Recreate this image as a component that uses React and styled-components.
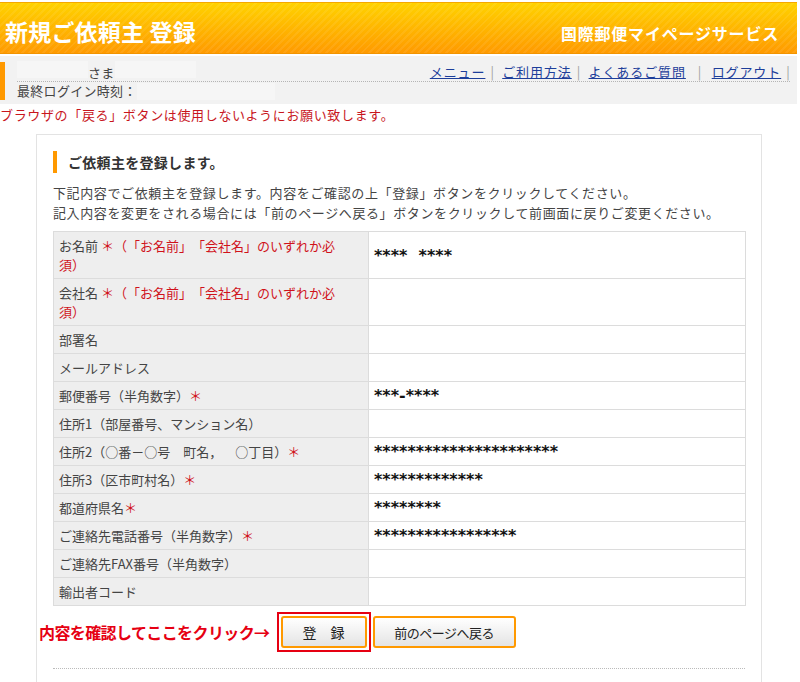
import React from "react";
import styled, { createGlobalStyle } from "styled-components";

const GlobalStyle = createGlobalStyle`
  body {
    margin: 0;
    background: #fff;
    font-family: "Noto Sans CJK JP", "Noto Sans", sans-serif;
    color: #444;
    text-spacing-trim: space-all;
  }
`;

const Page = styled.div`
  width: 797px;
`;

const Header = styled.header`
  display: flex;
  align-items: center;
  justify-content: space-between;
  height: 52px;
  margin-top: 2px;
  padding: 6px 18px 0 5px;
  box-sizing: border-box;
  border-top: 1px solid #f5a800;
  border-bottom: 1px solid #f29400;
  background:
    repeating-linear-gradient(135deg, rgba(255, 255, 255, 0.07) 0 2px, transparent 2px 5px),
    linear-gradient(#ffd200, #ff9a00);
  color: #fff;
  font-weight: 700;
`;

const PageTitle = styled.h1`
  margin: 0;
  font-size: 23px;
  letter-spacing: 0.2px;
`;

const ServiceName = styled.div`
  font-size: 16px;
  letter-spacing: 0.8px;
  padding-top: 4px;
`;

const UserBar = styled.div`
  display: flex;
  margin-top: 2px;
  padding: 6px 0 4px;
  background: #f2f2f2;
  font-size: 13px;
`;

const Mark = styled.div`
  width: 5px;
  background: #ff9900;
`;

const UserInfo = styled.div`
  flex: 1;
  margin: 0 7px 0 12px;
`;

const InfoRow = styled.div`
  display: flex;
  align-items: center;
  justify-content: ${(p) => (p.$split ? "space-between" : "flex-start")};
  height: ${(p) => (p.$split ? "19px" : "18px")};
  line-height: 18px;
  letter-spacing: 0.3px;
  border-bottom: ${(p) => (p.$split ? "1px dotted #b5b5b5" : "none")};
`;

const Blank = styled.span`
  display: inline-block;
  width: ${(p) => p.$w}px;
  height: 17px;
  background: #f6f6f6;
`;

const Links = styled.nav`
  display: flex;
  align-items: center;
`;

const NavLink = styled.a`
  color: #1d3e9a;
  text-decoration: underline;
  letter-spacing: 0.9px;
  cursor: pointer;
`;

const Sep = styled.span`
  color: #a0a0a0;
  margin: 0 ${(p) => (p.$wide ?? 8)}px 0 ${(p) => p.$left || 5}px;
`;

const Warning = styled.p`
  margin: 1px 0 0;
  font-size: 13px;
  line-height: 20px;
  letter-spacing: 0.65px;
  color: #c8161d;
`;

const Panel = styled.section`
  width: 726px;
  box-sizing: border-box;
  margin: 9px 0 0 36px;
  padding: 16px 16px 40px;
  border: 1px solid #e3e3e3;
`;

const Heading = styled.h2`
  margin: 0;
  padding-left: 11px;
  border-left: 4px solid #ff9900;
  height: 22px;
  line-height: 22px;
  font-size: 14px;
  letter-spacing: 0.3px;
  color: #333;
`;

const Intro = styled.p`
  margin: 10px 0 0;
  font-size: 13px;
  line-height: 20px;
  color: #444;
  letter-spacing: 0.62px;
`;

const Table = styled.table`
  width: 693px;
  margin-top: 8px;
  border-collapse: collapse;
  border: 1px solid #dcdcdc;
`;

const Label = styled.th`
  width: 303px;
  padding: 4px 6px 4px 5px;
  background: #eeeeee;
  border: 1px solid #dcdcdc;
  text-align: left;
  font-weight: 400;
  font-size: 13px;
  line-height: 19px;
  color: #444;
`;

const Value = styled.td`
  padding: 4px 6px 4px 5px;
  border: 1px solid #dcdcdc;
  font-family: "DejaVu Sans", sans-serif;
  font-weight: 700;
  font-size: 16px;
  line-height: 19px;
  color: #111;
  white-space: pre;
`;

const Req = styled.span`
  color: #d0121b;
`;

const Actions = styled.div`
  display: flex;
  align-items: center;
  margin: 6px 0 0 -14px;
`;

const Hint = styled.span`
  margin-right: 7px;
  font-size: 16px;
  font-weight: 700;
  letter-spacing: -0.6px;
  color: #e60012;
`;

const Frame = styled.div`
  display: flex;
  padding: 2px;
  border: 2px solid #e60012;
`;

const Button = styled.button`
  box-sizing: border-box;
  width: ${(p) => p.$w}px;
  height: 32px;
  margin-left: ${(p) => p.$gap || 0}px;
  border: 2px solid #ff9900;
  border-radius: 3px;
  background: linear-gradient(#ffffff, #e4e4e4);
  font-family: "Noto Sans CJK JP", sans-serif;
  font-size: ${(p) => p.$size || 14}px;
  letter-spacing: ${(p) => p.$ls || 0}px;
  color: #222;
  cursor: pointer;
`;

const Divider = styled.hr`
  margin: 16px 0 0;
  border: none;
  border-top: 1px dotted #bbb;
`;

const rows = [
  {
    label: (
      <>
        お名前 <Req>＊（「お名前」「会社名」のいずれか必<br />須）</Req>
      </>
    ),
    value: "****  ****",
  },
  {
    label: (
      <>
        会社名 <Req>＊（「お名前」「会社名」のいずれか必<br />須）</Req>
      </>
    ),
    value: "",
  },
  { label: "部署名", value: "" },
  { label: "メールアドレス", value: "" },
  {
    label: (
      <>
        郵便番号（半角数字）<Req>＊</Req>
      </>
    ),
    value: "***-****",
  },
  { label: "住所1（部屋番号、マンション名）", value: "" },
  {
    label: (
      <>
        住所2（○番－○号　町名，　○丁目）<Req>＊</Req>
      </>
    ),
    value: "**********************",
  },
  {
    label: (
      <>
        住所3（区市町村名）<Req>＊</Req>
      </>
    ),
    value: "*************",
  },
  {
    label: (
      <>
        都道府県名<Req>＊</Req>
      </>
    ),
    value: "********",
  },
  {
    label: (
      <>
        ご連絡先電話番号（半角数字）<Req>＊</Req>
      </>
    ),
    value: "*****************",
  },
  { label: "ご連絡先FAX番号（半角数字）", value: "" },
  { label: "輸出者コード", value: "" },
];

export default function App() {
  return (
    <Page>
      <GlobalStyle />
      <Header>
        <PageTitle>新規ご依頼主 登録</PageTitle>
        <ServiceName>国際郵便マイページサービス</ServiceName>
      </Header>

      <UserBar>
        <Mark />
        <UserInfo>
          <InfoRow $split>
            <span>
              <Blank $w={71} />
              さま
              <Blank $w={81} />
            </span>
            <Links>
              <NavLink>メニュー</NavLink>
              <Sep>|</Sep>
              <NavLink>ご利用方法</NavLink>
              <Sep>|</Sep>
              <NavLink>よくあるご質問</NavLink>
              <Sep $left={12} $wide={10}>|</Sep>
              <NavLink>ログアウト</NavLink>
              <Sep $wide={0}>|</Sep>
            </Links>
          </InfoRow>
          <InfoRow>
            最終ログイン時刻：
            <Blank $w={138} />
          </InfoRow>
        </UserInfo>
      </UserBar>

      <Warning>ブラウザの「戻る」ボタンは使用しないようにお願い致します。</Warning>

      <Panel>
        <Heading>ご依頼主を登録します。</Heading>
        <Intro>
          下記内容でご依頼主を登録します。内容をご確認の上「登録」ボタンをクリックしてください。
          <br />
          記入内容を変更をされる場合には「前のページへ戻る」ボタンをクリックして前画面に戻りご変更ください。
        </Intro>

        <Table>
          <tbody>
            {rows.map((row, i) => (
              <tr key={i}>
                <Label>{row.label}</Label>
                <Value>{row.value}</Value>
              </tr>
            ))}
          </tbody>
        </Table>

        <Actions>
          <Hint>内容を確認してここをクリック→</Hint>
          <Frame>
            <Button $w={86}>登　録</Button>
          </Frame>
          <Button $w={143} $gap={2} $size={13} $ls={-0.5}>
            前のページへ戻る
          </Button>
        </Actions>
        <Divider />
      </Panel>
    </Page>
  );
}
